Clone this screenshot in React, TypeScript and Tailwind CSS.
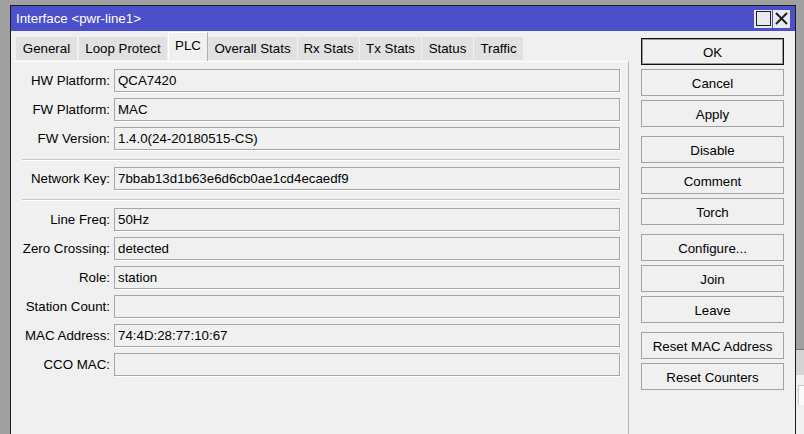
import React from "react";

type Tab = { label: string; cls: string; active?: boolean };

const tabs: Tab[] = [
  { label: "General", cls: "ml-[3px] w-[61px]" },
  { label: "Loop Protect", cls: "ml-[2px] w-[88px]" },
  { label: "PLC", cls: "ml-[1px] w-[40px]", active: true },
  { label: "Overall Stats", cls: "w-[89px]" },
  { label: "Rx Stats", cls: "ml-[1px] w-[61px]" },
  { label: "Tx Stats", cls: "ml-[1px] w-[61px]" },
  { label: "Status", cls: "ml-[1px] w-[51px]" },
  { label: "Traffic", cls: "ml-[1px] w-[49px]" },
];

const buttonGroups: string[][] = [
  ["OK", "Cancel", "Apply"],
  ["Disable", "Comment", "Torch"],
  ["Configure...", "Join", "Leave"],
  ["Reset MAC Address", "Reset Counters"],
];

function Field({ label, value }: { label: string; value?: string }) {
  return (
    <div className="flex items-center h-[23px]">
      <div className="w-[97px] text-right whitespace-nowrap overflow-hidden">{label}</div>
      <div className="ml-[4px] flex-1 h-full border border-[#a6a6a6] shadow-[1px_1px_0_#ffffff] pl-[3px] pt-[1px] flex items-center">
        {value}
      </div>
    </div>
  );
}

function Separator({ cls }: { cls: string }) {
  return <div className={`ml-[9px] h-[1px] bg-[#c9c9c9] shadow-[0_1px_0_#ffffff] ${cls}`} />;
}

function WinButton({ label, primary }: { label: string; primary?: boolean }) {
  return (
    <div
      className={
        primary
          ? "h-[27px] w-[143px] pt-[2px] flex items-center justify-center bg-[#f0f0f0] border border-[#111111] shadow-[inset_0_0_0_1px_#9a9a9a]"
          : "h-[27px] w-[143px] pt-[2px] flex items-center justify-center bg-[#f0f0f0] border border-[#a3a3a3]"
      }
    >
      {label}
    </div>
  );
}

export default function App() {
  return (
    <div
      className="w-[804px] h-[434px] overflow-hidden bg-[#a0a0a0] flex flex-col text-[13.3px] text-black leading-none"
      style={{ fontFamily: '"Liberation Sans", Arial, sans-serif' }}
    >
      <div className="h-[5px] shrink-0" />
      <div className="flex flex-1 min-h-0">
        <div className="w-[10px] shrink-0" />

        {/* Window */}
        <div className="w-[786px] shrink-0 border-l border-t border-r border-[#1c1c1c] bg-[#f0f0f0] flex flex-col">
          {/* Title bar */}
          <div className="h-[25px] shrink-0 bg-[#4b4fc9] flex items-center pl-[5px] pr-[5px]">
            <span className="text-white pt-[1px]">Interface &lt;pwr-line1&gt;</span>
            <div className="ml-auto flex gap-[1px]">
              <div className="w-[18px] h-[18px] bg-[#e9e9f2] flex items-center justify-center">
                <div className="w-[15px] h-[15px] border-[1.5px] border-[#202020]" />
              </div>
              <div className="w-[17px] h-[18px] bg-[#e9e9f2] flex items-center justify-center">
                <svg width="15" height="15" viewBox="0 0 15 15">
                  <path d="M2 2 L13 13 M13 2 L2 13" stroke="#202020" strokeWidth="2" fill="none" />
                </svg>
              </div>
            </div>
          </div>

          <div className="flex flex-1 min-h-0">
            {/* Tabs and page */}
            <div className="w-[618px] shrink-0 pl-[2px] flex flex-col">
              <div className="h-[30px] shrink-0 flex items-end">
                {tabs.map((t) => (
                  <div
                    key={t.label}
                    className={
                      t.active
                        ? `${t.cls} h-[29px] bg-[#f0f0f0] border-l border-r border-t border-l-white border-t-white border-r-[#b0b0b0] flex items-center justify-center pb-[3px]`
                        : `${t.cls} h-[23px] mb-[1px] pt-[1px] bg-[#e1e1e1] flex items-center justify-center`
                    }
                  >
                    {t.label}
                  </div>
                ))}
              </div>

              <div className="flex-1 border-t border-t-white border-r border-r-[#b4b4b4] pt-[7px] pr-[8px] flex flex-col">
                <div className="flex flex-col gap-[6px]">
                  <Field label="HW Platform:" value="QCA7420" />
                  <Field label="FW Platform:" value="MAC" />
                  <Field label="FW Version:" value="1.4.0(24-20180515-CS)" />
                </div>
                <Separator cls="mt-[9px] mb-[7px]" />
                <Field label="Network Key:" value="7bbab13d1b63e6d6cb0ae1cd4ecaedf9" />
                <Separator cls="mt-[9px] mb-[8px]" />
                <div className="flex flex-col gap-[6px]">
                  <Field label="Line Freq:" value="50Hz" />
                  <Field label="Zero Crossing:" value="detected" />
                  <Field label="Role:" value="station" />
                  <Field label="Station Count:" />
                  <Field label="MAC Address:" value="74:4D:28:77:10:67" />
                  <Field label="CCO MAC:" />
                </div>
              </div>
            </div>

            {/* Action buttons */}
            <div className="flex-1 pt-[7px] pl-[12px] flex flex-col gap-[9px]">
              {buttonGroups.map((group, gi) => (
                <div key={gi} className="flex flex-col gap-[4px]">
                  {group.map((b) => (
                    <WinButton key={b} label={b} primary={b === "OK"} />
                  ))}
                </div>
              ))}
            </div>
          </div>
        </div>

        {/* Window behind, peeking out on the right */}
        <div className="flex-1 flex flex-col">
          <div className="h-[344px] shrink-0" />
          <div className="h-[26px] shrink-0 border-t border-[#7a7a7a] bg-[#d4d4d4]" />
          <div className="flex-1 bg-[#f0f0f0] pt-[10px] pl-[2px]">
            <div className="h-[20px] bg-[#fafafa] border-l border-t border-[#c8c8c8]" />
          </div>
        </div>
      </div>
    </div>
  );
}
